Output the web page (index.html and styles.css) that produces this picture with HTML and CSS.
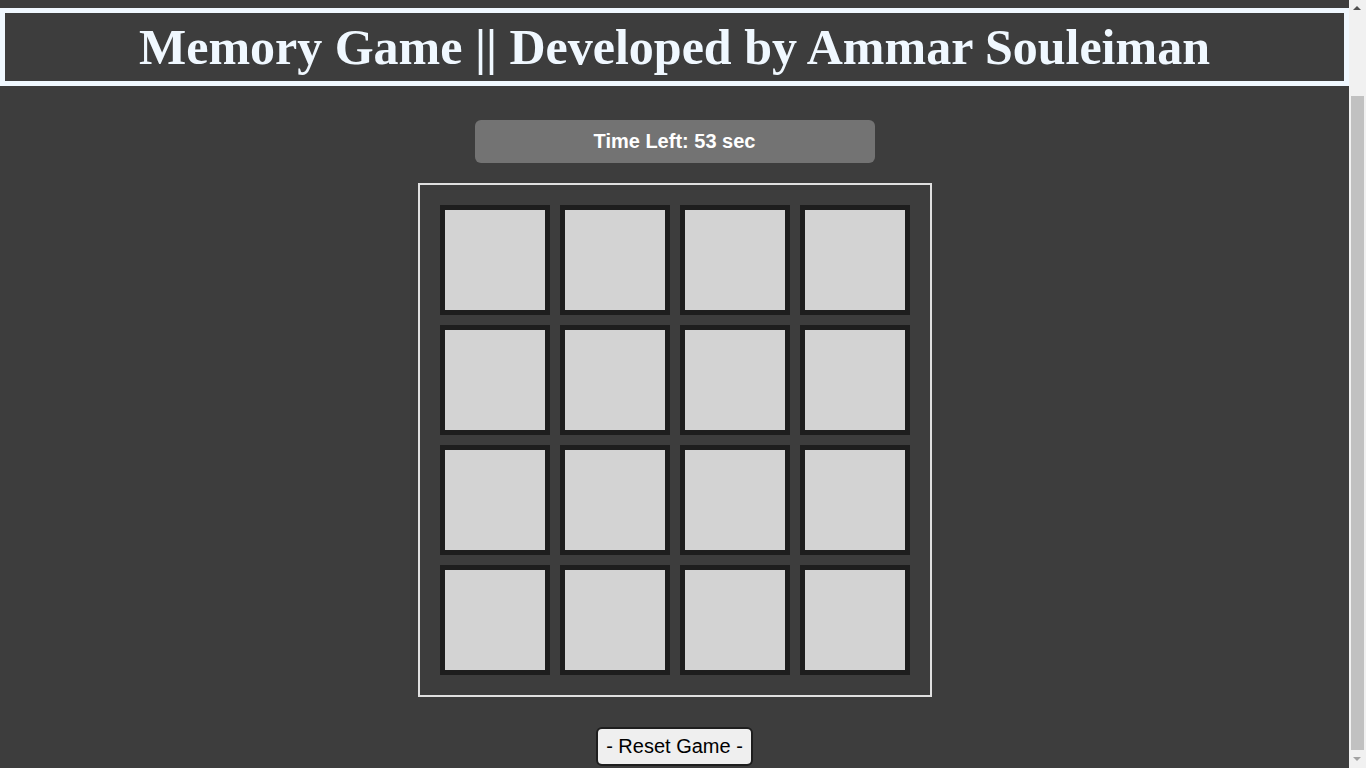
FILE: index.html
```html
<!DOCTYPE html>
<html lang="en">
<head>
<meta charset="utf-8">
<title>Memory Game</title>
<link rel="stylesheet" href="styles.css">
</head>
<body>
<header class="header">
  <h1 class="title">Memory Game || Developed by Ammar Souleiman</h1>
</header>
<main class="game">
  <div class="timer">Time Left: 53 sec</div>
  <div class="board">
    <div class="card"></div><div class="card"></div><div class="card"></div><div class="card"></div>
    <div class="card"></div><div class="card"></div><div class="card"></div><div class="card"></div>
    <div class="card"></div><div class="card"></div><div class="card"></div><div class="card"></div>
    <div class="card"></div><div class="card"></div><div class="card"></div><div class="card"></div>
  </div>
  <button class="reset">- Reset Game -</button>
</main>
<div class="scrollbar" aria-hidden="true">
  <div class="sb-arrow sb-up"></div>
  <div class="sb-track"><div class="sb-thumb"></div></div>
  <div class="sb-arrow sb-down"></div>
</div>
</body>
</html>
```
FILE: styles.css
```css
html {
  background: #3d3d3d;
  overflow: hidden;
}
body {
  margin: 0;
  padding-top: 8px;
  margin-right: 17px;
  background: #3d3d3d;
  font-family: "Liberation Sans", Arial, sans-serif;
}
.header {
  border: 5px solid aliceblue;
  height: 68px;
  display: flex;
  align-items: center;
  justify-content: center;
}
.title {
  margin: 0;
  font-family: "Liberation Serif", "Times New Roman", serif;
  font-weight: bold;
  font-size: 50px;
  line-height: 68px;
  color: aliceblue;
  text-align: center;
}
.game {
  display: flex;
  flex-direction: column;
  align-items: center;
  padding-top: 34px;
  padding-bottom: 40px;
}
.timer {
  width: 400px;
  height: 43px;
  background: #737373;
  border-radius: 6px;
  color: #fff;
  font-weight: bold;
  font-size: 20px;
  display: flex;
  align-items: center;
  justify-content: center;
}
.board {
  margin-top: 20px;
  border: 2px solid #e0e0e0;
  padding: 20px;
  display: grid;
  grid-template-columns: repeat(4, 110px);
  grid-auto-rows: 110px;
  gap: 10px;
}
.card {
  box-sizing: border-box;
  border: 5px solid #1e1e1e;
  background: #d3d3d3;
}
.reset {
  margin-top: 30px;
  font-family: "Liberation Sans", Arial, sans-serif;
  font-size: 20px;
  padding: 6px 8px;
  background: #efefef;
  color: #000;
  border: 2px solid #1e1e1e;
  border-radius: 6px;
}
.scrollbar {
  position: fixed;
  top: 0;
  right: 0;
  width: 17px;
  height: 100vh;
  background: #f1f1f1;
  display: flex;
  flex-direction: column;
}
.sb-arrow {
  height: 17px;
  position: relative;
}
.sb-arrow::after {
  content: "";
  position: absolute;
  left: 4px;
  border-left: 4px solid transparent;
  border-right: 4px solid transparent;
}
.sb-up::after {
  top: 6px;
  border-bottom: 4px solid #505050;
}
.sb-down::after {
  top: 6px;
  border-top: 4px solid #a3a3a3;
}
.sb-track {
  flex: 1;
  padding: 79px 2px 0 2px;
}
.sb-thumb {
  height: 654px;
  background: #c1c1c1;
}
```
